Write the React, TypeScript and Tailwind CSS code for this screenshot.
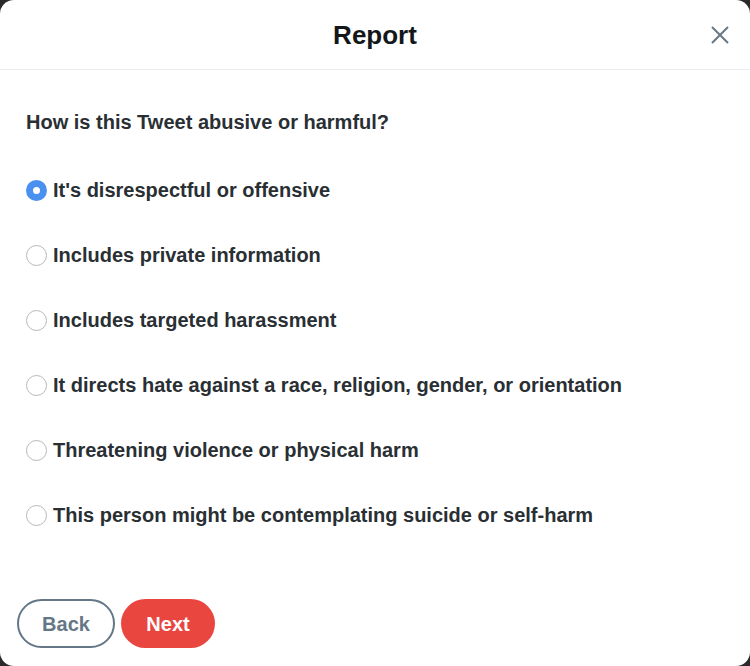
import { useState } from "react"

const options = [
  "It's disrespectful or offensive",
  "Includes private information",
  "Includes targeted harassment",
  "It directs hate against a race, religion, gender, or orientation",
  "Threatening violence or physical harm",
  "This person might be contemplating suicide or self-harm",
]

function App() {
  const [selected, setSelected] = useState(0)

  return (
    <div className="h-[666px] w-[750px] bg-[#2a2a2a] overflow-hidden" style={{ fontFamily: "'Liberation Sans', Arial, sans-serif" }}>
      <div className="h-full w-full bg-white rounded-[14px] flex flex-col">
        <div className="h-[70px] flex items-center justify-center relative border-b border-[#e6ecf0]">
          <h2 className="text-[26px] font-bold text-[#14171a] mt-[2px]">Report</h2>
          <button className="absolute right-[20px] top-[25px] text-[#657786]">
            <svg width="20" height="20" viewBox="0 0 20 20" fill="none" stroke="currentColor" strokeWidth="2">
              <path d="M2 2 L18 18 M18 2 L2 18" />
            </svg>
          </button>
        </div>

        <div className="px-[26px] pt-[40px] flex-1">
          <p className="text-[20px] font-bold text-[#292f33] leading-[24px]">How is this Tweet abusive or harmful?</p>
          <div className="mt-[44px] flex flex-col gap-[41px]">
            {options.map((opt, i) => (
              <label key={opt} className="flex items-center gap-[6px] cursor-pointer" onClick={() => setSelected(i)}>
                {selected === i ? (
                  <span className="w-[21px] h-[21px] shrink-0 rounded-full bg-[#4a90f0] flex items-center justify-center">
                    <span className="w-[7px] h-[7px] rounded-full bg-white" />
                  </span>
                ) : (
                  <span className="w-[21px] h-[21px] shrink-0 rounded-full border border-[#b8b8b8] bg-white" />
                )}
                <span className="text-[20px] font-bold text-[#292f33] leading-[24px]">{opt}</span>
              </label>
            ))}
          </div>
        </div>

        <div className="px-[17px] pb-[18px] flex gap-[6px]">
          <button className="h-[49px] w-[98px] rounded-full border-2 border-[#657786] text-[#657786] text-[20px] font-bold">Back</button>
          <button className="h-[49px] w-[94px] rounded-full bg-[#ea4640] text-white text-[20px] font-bold">Next</button>
        </div>
      </div>
    </div>
  )
}

export default App
